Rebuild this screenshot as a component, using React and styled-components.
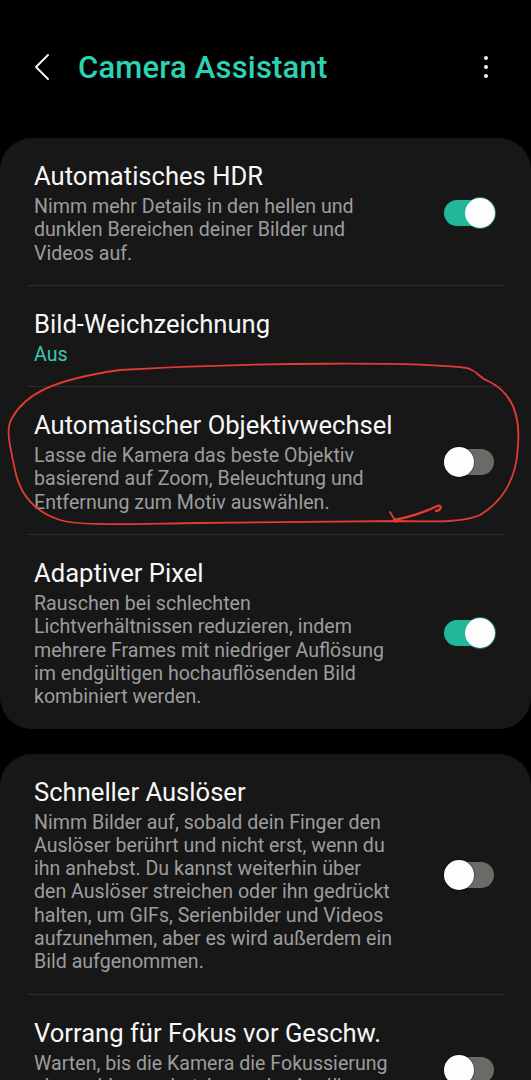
import styled, { createGlobalStyle } from 'styled-components';

const GlobalStyle = createGlobalStyle`
  html, body {
    margin: 0;
    padding: 0;
    background: #000;
  }
  body {
    font-family: Roboto, 'Noto Sans', sans-serif;
    -webkit-font-smoothing: antialiased;
  }
`;

const Page = styled.div`
  position: relative;
  width: 531px;
  height: 1080px;
  overflow: hidden;
  background: #000;
`;

const Header = styled.header`
  display: flex;
  align-items: center;
  height: 46px;
  padding: 44px 0 0 30px;
`;

const BackButton = styled.div`
  width: 20px;
  height: 30px;
  display: flex;
  align-items: center;
`;

const HeaderTitle = styled.h1`
  margin: 0 0 0 28px;
  flex: 1;
  font-size: 31px;
  font-weight: 500;
  color: #2dd1b3;
  letter-spacing: 0.2px;
`;

const MoreButton = styled.div`
  width: 8px;
  display: flex;
  flex-direction: column;
  align-items: center;
  gap: 5px;
  margin-right: 41px;
`;

const Dot = styled.span`
  width: 4px;
  height: 4px;
  border-radius: 50%;
  background: #f2f2f2;
`;

const Card = styled.section`
  background: #171717;
  border-radius: 32px;
  margin: ${(p) => (p.$first ? '48px' : '25px')} 0 0;
`;

const Row = styled.div`
  display: flex;
  align-items: center;
  padding: 23px 37px 20px 34px;
`;

const TextCol = styled.div`
  width: 362px;
  display: flex;
  flex-direction: column;
  gap: 4px;
`;

const Title = styled.div`
  font-size: 25.6px;
  line-height: 30px;
  color: #f7f7f7;
  white-space: nowrap;
`;

const Description = styled.div`
  font-size: 19.6px;
  line-height: 23.3px;
  color: ${(p) => (p.$accent ? '#3bcaaf' : '#9d9d9d')};
`;

const Divider = styled.div`
  height: 1px;
  margin: 0 28px;
  background: #2c2c2c;
`;

const Track = styled.span`
  position: relative;
  margin-left: auto;
  width: 50px;
  height: 26px;
  border-radius: 13px;
  background: ${(p) => (p.$on ? '#21b79a' : '#6a6a66')};
  flex: none;
`;

const Thumb = styled.span`
  position: absolute;
  top: -2px;
  left: ${(p) => (p.$on ? '21px' : '0')};
  width: 30px;
  height: 30px;
  border-radius: 50%;
  background: #fdfdfd;
  box-shadow: 0 0 0 1px ${(p) => (p.$on ? 'rgba(33, 183, 154, 0.6)' : 'rgba(0,0,0,0.25)')};
`;

const Annotation = styled.svg`
  position: absolute;
  left: 0;
  top: 0;
  pointer-events: none;
`;

const Toggle = ({ on }) => (
  <Track $on={on}>
    <Thumb $on={on} />
  </Track>
);

const Setting = ({ title, desc, accent, toggle }) => (
  <Row>
    <TextCol>
      <Title>{title}</Title>
      {desc && <Description $accent={accent}>{desc}</Description>}
    </TextCol>
    {toggle !== undefined && <Toggle on={toggle} />}
  </Row>
);

export default function App() {
  return (
    <Page>
      <GlobalStyle />
      <Header>
        <BackButton>
          <svg width="20" height="30" viewBox="0 0 20 30">
            <path d="M18 3 L6 15 L18 27" fill="none" stroke="#f2f2f2" strokeWidth="2" strokeLinecap="round" strokeLinejoin="round" />
          </svg>
        </BackButton>
        <HeaderTitle>Camera Assistant</HeaderTitle>
        <MoreButton>
          <Dot />
          <Dot />
          <Dot />
        </MoreButton>
      </Header>

      <Card $first>
        <Setting
          title="Automatisches HDR"
          desc="Nimm mehr Details in den hellen und dunklen Bereichen deiner Bilder und Videos auf."
          toggle
        />
        <Divider />
        <Setting title="Bild-Weichzeichnung" desc="Aus" accent />
        <Divider />
        <Setting
          title="Automatischer Objektivwechsel"
          desc="Lasse die Kamera das beste Objektiv basierend auf Zoom, Beleuchtung und Entfernung zum Motiv auswählen."
          toggle={false}
        />
        <Divider />
        <Setting
          title="Adaptiver Pixel"
          desc="Rauschen bei schlechten Lichtverhältnissen reduzieren, indem mehrere Frames mit niedriger Auflösung im endgültigen hochauflösenden Bild kombiniert werden."
          toggle
        />
      </Card>

      <Card>
        <Setting
          title="Schneller Auslöser"
          desc="Nimm Bilder auf, sobald dein Finger den Auslöser berührt und nicht erst, wenn du ihn anhebst. Du kannst weiterhin über den Auslöser streichen oder ihn gedrückt halten, um GIFs, Serienbilder und Videos aufzunehmen, aber es wird außerdem ein Bild aufgenommen."
          toggle={false}
        />
        <Divider />
        <Setting
          title="Vorrang für Fokus vor Geschw."
          desc="Warten, bis die Kamera die Fokussierung abgeschlossen hat, bevor der Auslöser ausgelöst wird."
          toggle={false}
        />
      </Card>

      <Annotation width="531" height="1080" viewBox="0 0 531 1080">
        <g fill="none" stroke="#e23a34" strokeWidth="1.8" strokeLinecap="round" strokeLinejoin="round">
          <path d="M120 370 C260 362 420 362 467 368 C480 372 478 378 490 382 C515 395 520 420 518 445 C517 475 505 500 480 515 C465 522 440 522 400 521 L200 523 C120 524 80 526 60 520 C35 512 20 495 15 470 C10 445 5 430 12 418 C25 395 50 380 120 370" />
          <path d="M390 512 L396 522" />
          <path d="M394 520 C410 517 425 512 437 506 C442 504 442 510 436 511" strokeWidth="2.4" />
        </g>
      </Annotation>
    </Page>
  );
}
